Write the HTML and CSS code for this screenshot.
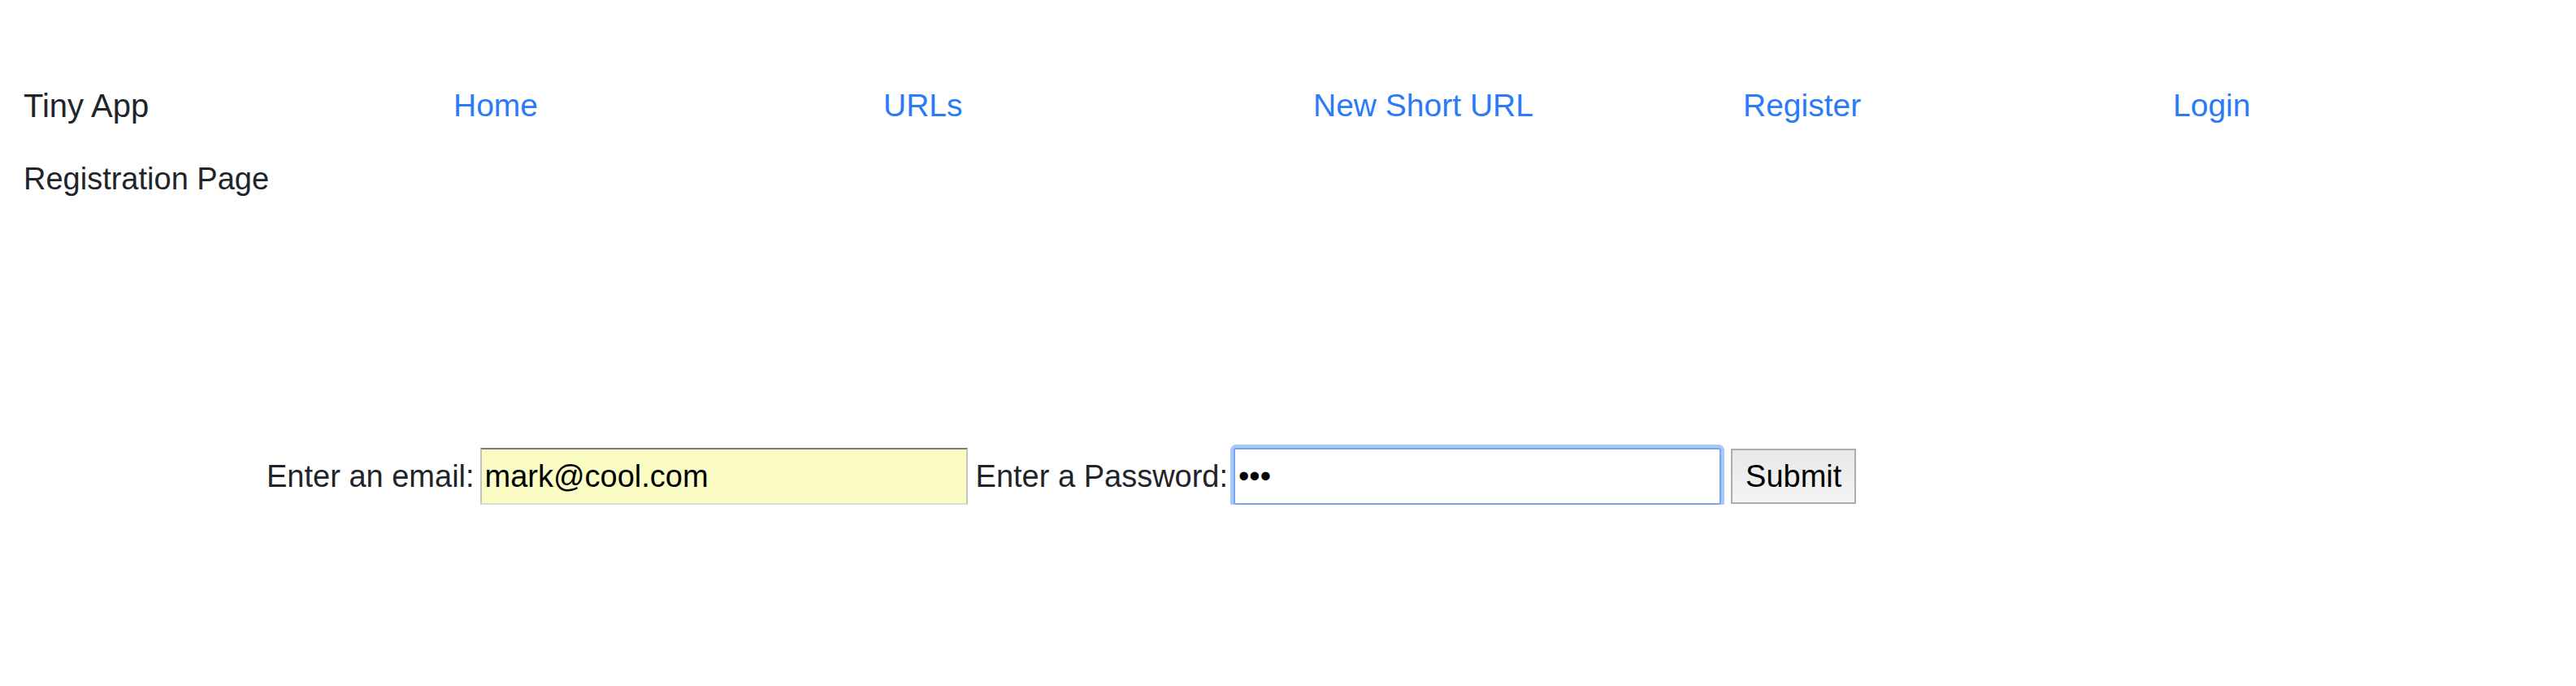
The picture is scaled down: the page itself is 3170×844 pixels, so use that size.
FILE: index.html
```html
<!DOCTYPE html>
<html lang="en">
<head>
<meta charset="utf-8">
<title>Tiny App - Register</title>
<link rel="stylesheet" href="styles.css">
</head>
<body>
<nav class="nav">
  <span class="brand">Tiny App</span>
  <a class="nav-link" href="#">Home</a>
  <a class="nav-link" href="#">URLs</a>
  <a class="nav-link" href="#">New Short URL</a>
  <a class="nav-link" href="#">Register</a>
  <a class="nav-link" href="#">Login</a>
</nav>
<h1 class="page-title">Registration Page</h1>
<form class="reg-form">
  <label class="field-label" for="email">Enter an email:</label>
  <input class="field field-autofill" id="email" type="text" value="mark@cool.com">
  <label class="field-label field-label-pw" for="password">Enter a Password:</label>
  <input class="field field-focus" id="password" type="password" value="abc">
  <button class="submit" type="button">Submit</button>
</form>
</body>
</html>
```
FILE: styles.css
```css
html, body {
  margin: 0;
  padding: 0;
  background: #ffffff;
}
body {
  font-family: "Liberation Sans", Arial, sans-serif;
  font-size: 38px;
  line-height: 48px;
  color: #212529;
}
.nav {
  display: grid;
  grid-template-columns: repeat(5, 529px) auto;
  padding: 106px 0 0 29px;
  font-size: 39px;
}
.brand {
  color: #212529;
  font-size: 40px;
}
.nav-link {
  color: #2b7bf7;
  text-decoration: none;
}
.page-title {
  margin: 42px 0 0 29px;
  font-size: 38px;
  font-weight: normal;
  line-height: 48px;
}
.reg-form {
  display: flex;
  align-items: center;
  margin: 307px 0 0 328px;
}
.field-label {
  white-space: nowrap;
}
.field {
  box-sizing: border-box;
  width: 600px;
  height: 70px;
  margin: 0 0 0 7px;
  padding: 0 4px;
  font-family: "Liberation Sans", Arial, sans-serif;
  font-size: 38px;
  color: #000000;
  outline: none;
}
.field-autofill {
  background: #fafcc4;
  border-style: solid;
  border-width: 2px;
  border-color: #7c7c7c #c4c4c4 #dcdcdc #c4c4c4;
}
.field-label-pw {
  margin-left: 10px;
}
.field-focus {
  margin-left: 7px;
  background: #ffffff;
  border: 2px solid #77a6ee;
  border-radius: 3px;
  box-shadow: 0 0 0 4px #a7c8f8;
}
.submit {
  box-sizing: border-box;
  height: 68px;
  margin-left: 12px;
  padding: 0 16px;
  font-family: "Liberation Sans", Arial, sans-serif;
  font-size: 38px;
  color: #000000;
  background: linear-gradient(#e8e8e8, #f4f4f4);
  border: 2px solid #acacac;
  border-radius: 0;
}
```
